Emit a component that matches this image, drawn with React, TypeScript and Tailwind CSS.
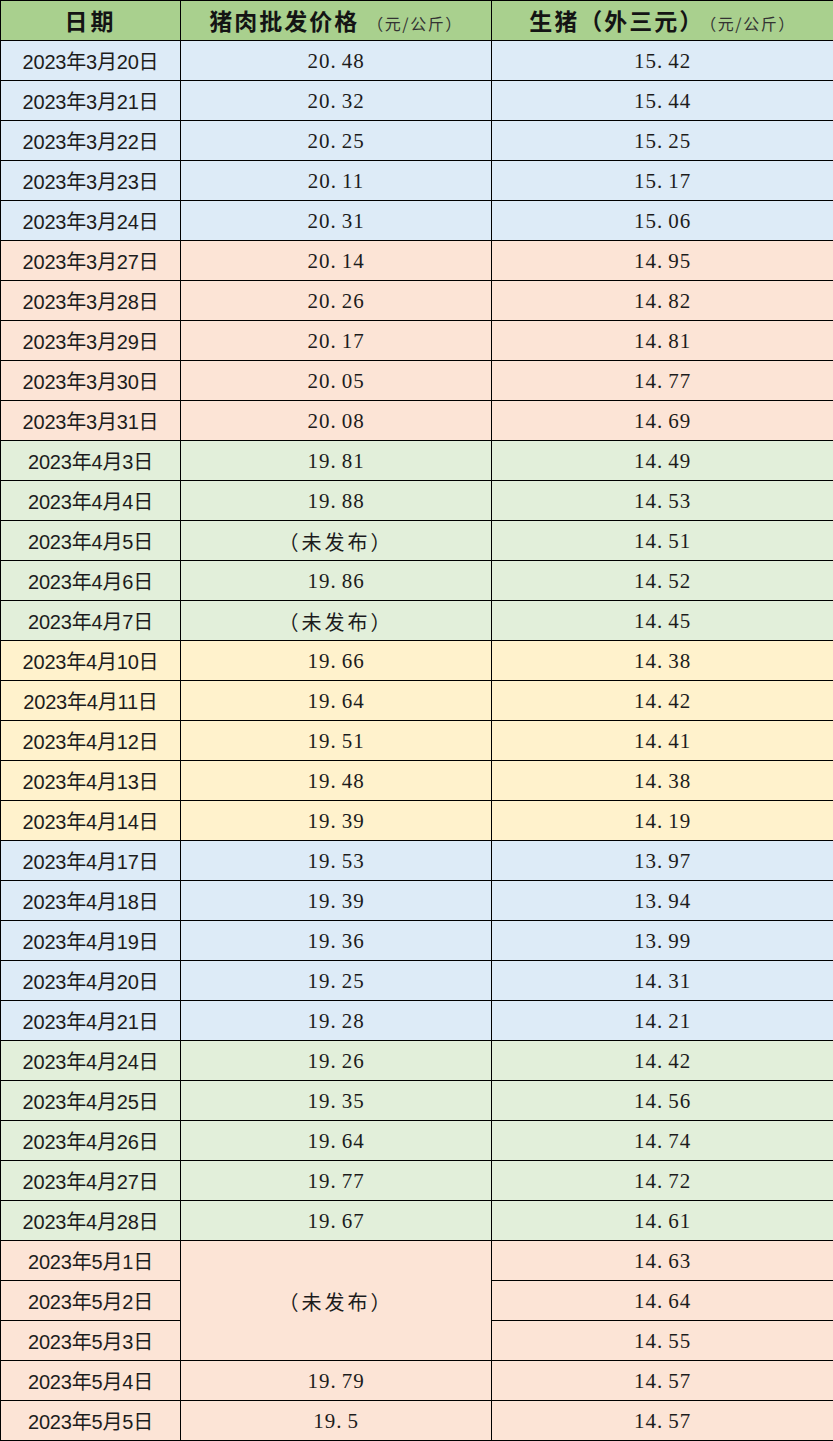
const rows: { d: string; p: string | null; h: string; c: string }[] = [
  { d: '2023年3月20日', p: '20.48', h: '15.42', c: 'blue' },
  { d: '2023年3月21日', p: '20.32', h: '15.44', c: 'blue' },
  { d: '2023年3月22日', p: '20.25', h: '15.25', c: 'blue' },
  { d: '2023年3月23日', p: '20.11', h: '15.17', c: 'blue' },
  { d: '2023年3月24日', p: '20.31', h: '15.06', c: 'blue' },
  { d: '2023年3月27日', p: '20.14', h: '14.95', c: 'peach' },
  { d: '2023年3月28日', p: '20.26', h: '14.82', c: 'peach' },
  { d: '2023年3月29日', p: '20.17', h: '14.81', c: 'peach' },
  { d: '2023年3月30日', p: '20.05', h: '14.77', c: 'peach' },
  { d: '2023年3月31日', p: '20.08', h: '14.69', c: 'peach' },
  { d: '2023年4月3日', p: '19.81', h: '14.49', c: 'green' },
  { d: '2023年4月4日', p: '19.88', h: '14.53', c: 'green' },
  { d: '2023年4月5日', p: '（未发布）', h: '14.51', c: 'green' },
  { d: '2023年4月6日', p: '19.86', h: '14.52', c: 'green' },
  { d: '2023年4月7日', p: '（未发布）', h: '14.45', c: 'green' },
  { d: '2023年4月10日', p: '19.66', h: '14.38', c: 'yellow' },
  { d: '2023年4月11日', p: '19.64', h: '14.42', c: 'yellow' },
  { d: '2023年4月12日', p: '19.51', h: '14.41', c: 'yellow' },
  { d: '2023年4月13日', p: '19.48', h: '14.38', c: 'yellow' },
  { d: '2023年4月14日', p: '19.39', h: '14.19', c: 'yellow' },
  { d: '2023年4月17日', p: '19.53', h: '13.97', c: 'blue' },
  { d: '2023年4月18日', p: '19.39', h: '13.94', c: 'blue' },
  { d: '2023年4月19日', p: '19.36', h: '13.99', c: 'blue' },
  { d: '2023年4月20日', p: '19.25', h: '14.31', c: 'blue' },
  { d: '2023年4月21日', p: '19.28', h: '14.21', c: 'blue' },
  { d: '2023年4月24日', p: '19.26', h: '14.42', c: 'green' },
  { d: '2023年4月25日', p: '19.35', h: '14.56', c: 'green' },
  { d: '2023年4月26日', p: '19.64', h: '14.74', c: 'green' },
  { d: '2023年4月27日', p: '19.77', h: '14.72', c: 'green' },
  { d: '2023年4月28日', p: '19.67', h: '14.61', c: 'green' },
  { d: '2023年5月1日', p: '（未发布）', h: '14.63', c: 'peach' },
  { d: '2023年5月2日', p: null, h: '14.64', c: 'peach' },
  { d: '2023年5月3日', p: null, h: '14.55', c: 'peach' },
  { d: '2023年5月4日', p: '19.79', h: '14.57', c: 'peach' },
  { d: '2023年5月5日', p: '19.5', h: '14.57', c: 'peach' },
]

const bg: Record<string, string> = {
  blue: 'bg-[#ddebf7]',
  peach: 'bg-[#fce4d6]',
  green: 'bg-[#e2efda]',
  yellow: 'bg-[#fff2cc]',
}

const serif = { fontFamily: '"Liberation Serif", "Noto Sans CJK SC", serif' }

// numbers look like SimSun: a wide gap after the dot
const Num = ({ v }: { v: string }) => {
  if (v.startsWith('（'))
    return <span className="font-['Noto_Sans_CJK_SC',sans-serif] text-[20px] tracking-[3px]">{v}</span>
  const [a, b] = v.split('.')
  return (
    <span className="text-[21px] tracking-[1px]">
      {a}.<span className="ml-[5px]">{b}</span>
    </span>
  )
}

const td = 'border border-black text-center align-middle p-0 pt-[3px] text-[#1c1c1c]'
const th = 'border border-black text-center align-middle p-0 text-[#141414] font-[\'Noto_Sans_CJK_SC\',sans-serif]'

export default function App() {
  return (
    <div className="w-[833px] bg-white">
      <table className="w-[833px] table-fixed border-collapse" style={serif}>
        <colgroup>
          <col className="w-[180px]" />
          <col className="w-[311px]" />
          <col className="w-[342px]" />
        </colgroup>
        <thead>
          <tr className="h-[40px] bg-[#a9d08e]">
            <th className={th + ' font-bold text-[23px] tracking-[3px]'}>日期</th>
            <th className={th}>
              <span className="font-bold text-[23px] tracking-[2px]">猪肉批发价格</span>
              <span className="ml-[8px] text-[16px] font-normal tracking-[1.5px] text-[#333]">（元/公斤）</span>
            </th>
            <th className={th}>
              <span className="font-bold text-[23px] tracking-[2px]">生猪（外三元）</span>
              <span className="ml-[4px] text-[16px] font-normal tracking-[1.5px] text-[#333]">（元/公斤）</span>
            </th>
          </tr>
        </thead>
        <tbody>
          {rows.map((r) => (
            <tr key={r.d} className={'h-[40px] ' + bg[r.c]}>
              <td className={td + " font-['Liberation_Sans','Noto_Sans_CJK_SC',sans-serif] text-[20px] tracking-[-0.2px]"}>{r.d}</td>
              {r.p === '（未发布）' && r.d === '2023年5月1日' ? (
                <td rowSpan={3} className={td}>
                  <Num v={r.p} />
                </td>
              ) : r.p === null ? null : (
                <td className={td}>
                  <Num v={r.p} />
                </td>
              )}
              <td className={td}>
                <Num v={r.h} />
              </td>
            </tr>
          ))}
        </tbody>
      </table>
    </div>
  )
}
